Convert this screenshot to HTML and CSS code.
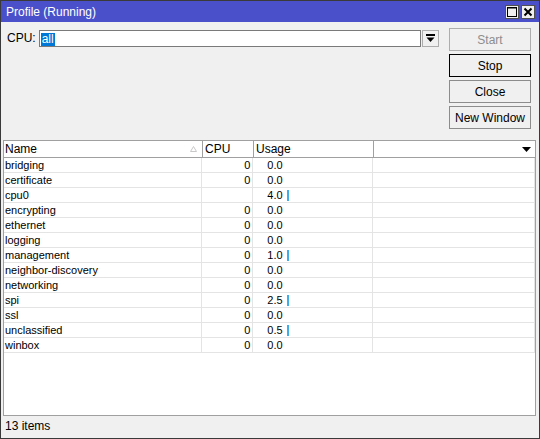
FILE: index.html
```html
<!DOCTYPE html>
<html>
<head>
<meta charset="utf-8">
<link rel="stylesheet" href="styles.css">
</head>
<body>
<div class="window">
  <div class="titlebar">
    <span class="title">Profile (Running)</span>
    <div class="tbtns">
      <span class="tbtn"><svg width="12" height="12" viewBox="0 0 12 12"><rect x="1.5" y="1.5" width="9" height="9" fill="none" stroke="#000" stroke-width="1"/><line x1="1" y1="2" x2="11" y2="2" stroke="#000" stroke-width="1"/></svg></span>
      <span class="tbtn"><svg width="12" height="12" viewBox="0 0 12 12"><path d="M2.5 2.5 L9.5 9.5 M9.5 2.5 L2.5 9.5" stroke="#000" stroke-width="2"/></svg></span>
    </div>
  </div>
  <div class="top">
    <div class="cpurow">
      <span class="lbl">CPU:</span>
      <div class="input"><span class="sel">all</span></div>
      <span class="ddbtn"><svg width="9" height="9" viewBox="0 0 9 9"><rect x="0" y="0" width="9" height="2" fill="#000"/><path d="M0.5 3.5 H8.5 L4.5 8 Z" fill="#000"/></svg></span>
    </div>
    <div class="btns">
      <div class="btn disabled">Start</div>
      <div class="btn default">Stop</div>
      <div class="btn">Close</div>
      <div class="btn">New Window</div>
    </div>
  </div>
  <div class="table">
    <div class="hrow">
      <div class="hc c1">Name<svg class="sort" width="7" height="6" viewBox="0 0 7 6"><path d="M3.5 0.5 L6.5 5.5 H0.5 Z" fill="none" stroke="#c8c8c8" stroke-width="1"/></svg></div>
      <div class="hc c2">CPU</div>
      <div class="hc c3">Usage</div>
      <div class="hc c4"><svg width="9" height="5" viewBox="0 0 9 5"><path d="M0 0 H9 L4.5 5 Z" fill="#000"/></svg></div>
    </div>
    <div class="rows">
      <div class="row"><div class="c c1">bridging</div><div class="c c2">0</div><div class="c c3">0.0</div><div class="c c4"></div></div>
      <div class="row"><div class="c c1">certificate</div><div class="c c2">0</div><div class="c c3">0.0</div><div class="c c4"></div></div>
      <div class="row"><div class="c c1">cpu0</div><div class="c c2"></div><div class="c c3">4.0<span class="bar"></span></div><div class="c c4"></div></div>
      <div class="row"><div class="c c1">encrypting</div><div class="c c2">0</div><div class="c c3">0.0</div><div class="c c4"></div></div>
      <div class="row"><div class="c c1">ethernet</div><div class="c c2">0</div><div class="c c3">0.0</div><div class="c c4"></div></div>
      <div class="row"><div class="c c1">logging</div><div class="c c2">0</div><div class="c c3">0.0</div><div class="c c4"></div></div>
      <div class="row"><div class="c c1">management</div><div class="c c2">0</div><div class="c c3">1.0<span class="bar"></span></div><div class="c c4"></div></div>
      <div class="row"><div class="c c1">neighbor-discovery</div><div class="c c2">0</div><div class="c c3">0.0</div><div class="c c4"></div></div>
      <div class="row"><div class="c c1">networking</div><div class="c c2">0</div><div class="c c3">0.0</div><div class="c c4"></div></div>
      <div class="row"><div class="c c1">spi</div><div class="c c2">0</div><div class="c c3">2.5<span class="bar"></span></div><div class="c c4"></div></div>
      <div class="row"><div class="c c1">ssl</div><div class="c c2">0</div><div class="c c3">0.0</div><div class="c c4"></div></div>
      <div class="row"><div class="c c1">unclassified</div><div class="c c2">0</div><div class="c c3">0.5<span class="bar"></span></div><div class="c c4"></div></div>
      <div class="row"><div class="c c1">winbox</div><div class="c c2">0</div><div class="c c3">0.0</div><div class="c c4"></div></div>
    </div>
  </div>
  <div class="status"><span>13 items</span></div>
</div>
</body>
</html>
```

FILE: styles.css
```css
* { box-sizing: border-box; }
html, body { margin: 0; padding: 0; }
body {
  font-family: "Liberation Sans", Arial, sans-serif;
  font-size: 11px;
  color: #000;
  background: #f0f0f0;
}
.window {
  width: 540px;
  height: 439px;
  border: 1px solid #3a3a3a;
  background: #f0f0f0;
  display: flex;
  flex-direction: column;
}
.titlebar {
  height: 21px;
  background: #4a50ca;
  display: flex;
  align-items: center;
  justify-content: space-between;
  padding: 0 4px 0 5px;
  flex: none;
}
.title {
  color: #fff;
  font-size: 12px;
}
.tbtns { display: flex; gap: 2px; }
.tbtn {
  width: 14px;
  height: 14px;
  background: #f0f0f0;
  border: 1px solid #505050;
  display: flex;
  align-items: center;
  justify-content: center;
}
.top {
  height: 118px;
  flex: none;
  display: flex;
  justify-content: space-between;
  padding: 6px 8px 0 6px;
}
.cpurow {
  display: flex;
  align-items: flex-start;
  height: 17px;
  margin-top: 2px;
}
.lbl {
  line-height: 17px;
  margin-right: 3px;
  font-size: 12px;
}
.input {
  width: 382px;
  height: 17px;
  background: #fff;
  border: 1px solid #7a7a7a;
  padding: 1px 1px;
  font-size: 12px;
}
.sel {
  display: inline-block;
  background: #0078d7;
  color: #fff;
  line-height: 13px;
  padding: 0 1px;
}
.ddbtn {
  width: 17px;
  height: 17px;
  margin-left: 1px;
  border: 1px solid #adadad;
  background: #f0f0f0;
  display: flex;
  align-items: center;
  justify-content: center;
}
.btns {
  display: flex;
  flex-direction: column;
  gap: 3px;
}
.btn {
  width: 82px;
  height: 23px;
  border: 1px solid #8c8c8c;
  background: #f0f0f0;
  display: flex;
  align-items: center;
  justify-content: center;
  font-size: 12px;
}
.btn.disabled { color: #8d8d8d; border-color: #adadad; }
.btn.default { border-color: #000; }
.table {
  margin: 0 3px 0 2px;
  height: 276px;
  flex: none;
  border: 1px solid #a0a0a0;
  background: #fff;
  display: flex;
  flex-direction: column;
}
.hrow {
  display: flex;
  height: 17px;
  border-bottom: 1px solid #a0a0a0;
  flex: none;
}
.hc {
  height: 16px;
  line-height: 16px;
  border-right: 1px solid #a0a0a0;
  padding-left: 2px;
  font-size: 12px;
}
.c1 { width: 199px; }
.c2 { width: 51px; }
.c3 { width: 120px; }
.c4 { flex: 1; }
.hc.c1 { display: flex; align-items: center; justify-content: space-between; padding-right: 5px; padding-left: 1px; }
.hc.c4 { border-right: none; display: flex; align-items: center; justify-content: flex-end; padding-right: 4px; }
.row {
  display: flex;
  height: 15px;
  border-bottom: 1px solid #e4e4e4;
}
.c {
  height: 14px;
  line-height: 14px;
  border-right: 1px solid #e4e4e4;
  white-space: nowrap;
}
.c.c1 { padding-left: 1px; }
.c.c2 { text-align: right; padding-right: 2px; }
.c.c3 { padding-left: 14px; display: flex; align-items: center; }
.c.c4 { border-right: 1px solid #e4e4e4; flex: none; width: 162px; }
.bar {
  display: inline-block;
  width: 2px;
  height: 11px;
  background: #3eaee8;
  margin-left: 4px;
}
.status {
  flex: 1;
  display: flex;
  align-items: center;
  padding: 0 3px 3px 4px;
  font-size: 12px;
}
```
